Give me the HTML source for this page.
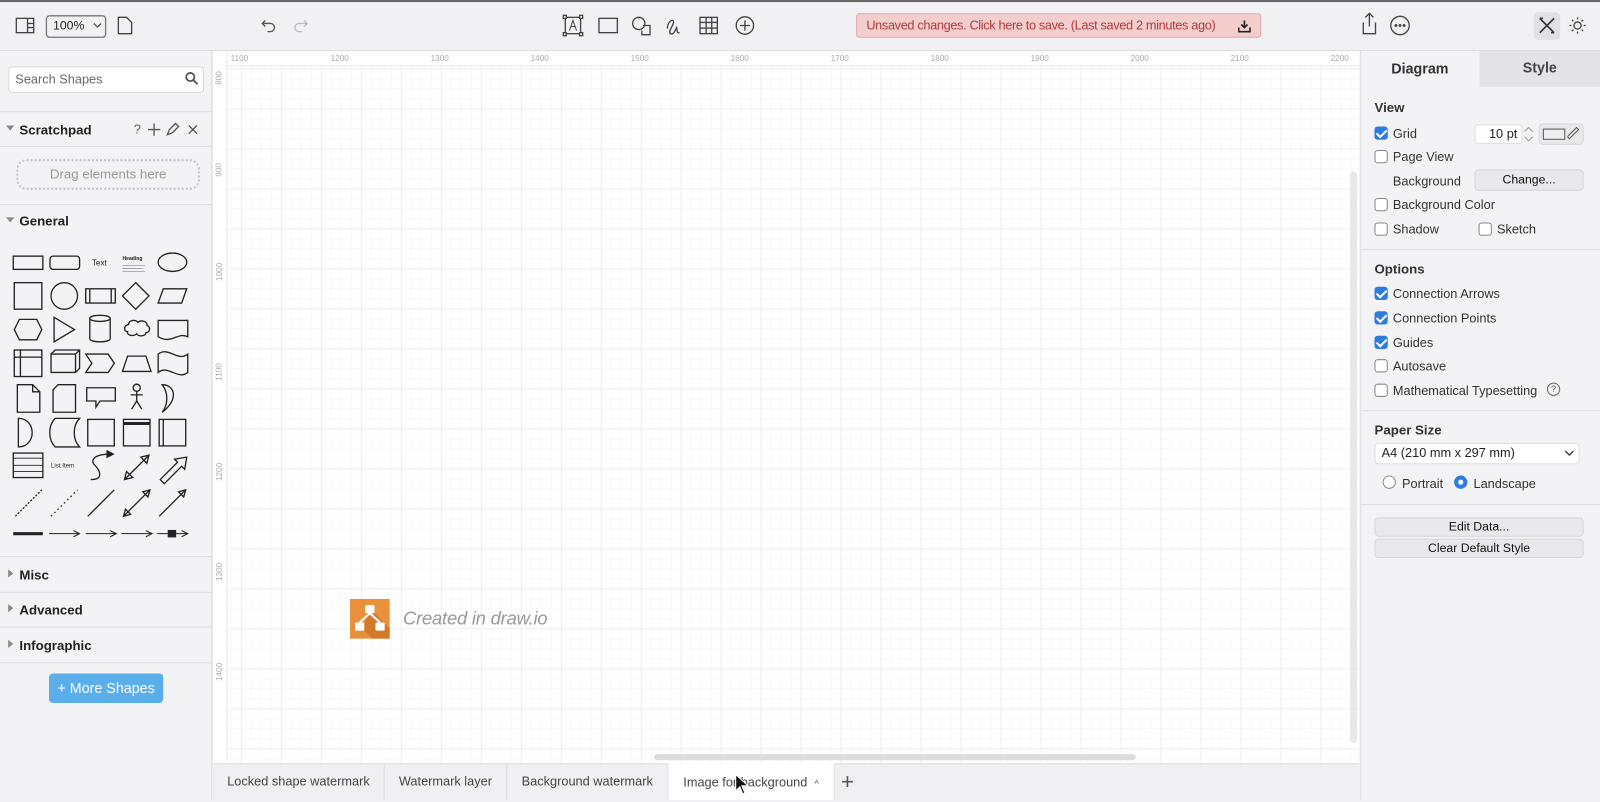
<!DOCTYPE html>
<html><head><meta charset="utf-8"><style>
*{box-sizing:border-box;margin:0;padding:0}
html,body{width:1600px;height:800px;overflow:hidden;background:#f1f1f3}
#w{position:absolute;left:0;top:0;width:1568px;height:784px;transform:scale(1.020408);transform-origin:0 0;font-family:"Liberation Sans",sans-serif;color:#222;font-size:12px}
.a{position:absolute}
.top{left:0;top:0;width:1568px;height:50px;background:#f1f1f3;border-top:2px solid #666;border-bottom:1px solid #ddd}
.side{left:0;top:50px;width:208px;height:734px;background:#f3f3f5;border-right:1px solid #ddd}
.canvas{left:209px;top:50px;width:1123px;height:698px;background-color:#fff;
background-image:linear-gradient(#efeff2 1px,transparent 1px),linear-gradient(90deg,#efeff2 1px,transparent 1px),linear-gradient(#f8f8fa 1px,transparent 1px),linear-gradient(90deg,#f8f8fa 1px,transparent 1px);
background-size:39.2px 39.2px,39.2px 39.2px,9.8px 9.8px,9.8px 9.8px;background-position:27px 17px}
.rt{left:209px;top:50px;width:1123px;height:15px;background:#fff;border-bottom:1px solid #e8e8e8}
.rl{left:209px;top:50px;width:14px;height:698px;background:#fff;border-right:1px solid #e8e8e8}
.rp{left:1333px;top:50px;width:235px;height:734px;background:#f3f3f5;border-left:1px solid #ddd}
.hr{height:1px;background:#ddd}
.cb{width:13px;height:13px;border:1px solid #888;border-radius:3px;background:#fff}
.cb.on{background:#2f7ce0;border-color:#2f7ce0}
.cb.on:after{content:"";position:absolute;left:3px;top:0px;width:4px;height:8px;border:solid #fff;border-width:0 2px 2px 0;transform:rotate(45deg)}
.lbl{font-size:12.5px;color:#333}
.btn{background:#e9e9eb;border:1px solid #d6d6d8;border-radius:4px;text-align:center;font-size:12px;color:#111}
.tab{top:748px;height:36px;font-size:12.5px;color:#444;line-height:36px;text-align:center;border-right:1px solid #ddd}
.rs{font-size:8px;color:#aaa}
.hd{font-size:13px;font-weight:bold;color:#222}
</style></head><body><div id="w">
<div class="a top"></div>
<svg class="a" style="left:0;top:0" width="1568" height="50" fill="none" stroke="#444" stroke-width="1.3">
<rect x="16" y="18" width="17" height="14"/><line x1="27" y1="18" x2="27" y2="32"/><line x1="27" y1="23" x2="33" y2="23"/><line x1="27" y1="27" x2="33" y2="27"/>
<rect x="45.5" y="15.5" width="58" height="21" rx="3" stroke="#777"/>
<path d="M92 23l3.5 3.5L99 23" stroke="#555"/>
<path d="M116 17h8l5 5v11h-13z"/>
<path d="M260 20l-3 3 3 3M257 23h8a4 4 0 010 8h-3" stroke="#555"/>
<path d="M298 20l3 3-3 3M301 23h-8a4 4 0 000 8h3" stroke="#bbb"/>
<rect x="554" y="17" width="15" height="16"/><rect x="552" y="15" width="3" height="3" fill="#fff"/><rect x="568" y="15" width="3" height="3" fill="#fff"/><rect x="552" y="32" width="3" height="3" fill="#fff"/><rect x="568" y="32" width="3" height="3" fill="#fff"/>
<path d="M558 30l3.5-10 3.5 10M559.5 26h4" stroke-width="1"/>
<rect x="587" y="18" width="18" height="14"/>
<circle cx="626" cy="23" r="6"/><path d="M630 25h7v9h-8v-4"/>
<path d="M654 28c0-6 5-10 6-7s-6 10-3 12 5-4 6-6c1 3 0 6 3 5"/>
<rect x="686" y="17" width="17" height="16"/><line x1="686" y1="22" x2="703" y2="22"/><line x1="686" y1="27.5" x2="703" y2="27.5"/><line x1="692" y1="17" x2="692" y2="33"/><line x1="697.5" y1="17" x2="697.5" y2="33"/>
<circle cx="730" cy="25" r="8.5"/><path d="M730 20v10M725 25h10"/>
<path d="M1336 22v11h12V22M1342 13v13M1338 17l4-4 4 4"/>
<circle cx="1372" cy="25" r="9"/><circle cx="1368" cy="25" r=".8" fill="#444"/><circle cx="1372" cy="25" r=".8" fill="#444"/><circle cx="1376" cy="25" r=".8" fill="#444"/>
<rect x="1503" y="12" width="26" height="27" rx="4" fill="#e1e1e4" stroke="none"/>
<path d="M1509 18l14 14M1523 18l-14 14M1509 18l3 0M1520 32l3 0" stroke="#333" stroke-width="1.6"/>
<circle cx="1546" cy="25" r="3.5"/><path d="M1546 17v2M1546 31v2M1538 25h2M1552 25h2M1540.5 19.5l1.4 1.4M1550 29l1.4 1.4M1540.5 30.5l1.4-1.4M1550 21l1.4-1.4"/>
</svg>
<div class="a" style="left:52px;top:18px;font-size:12px;color:#222">100%</div>
<div class="a" style="left:839px;top:13px;width:397px;height:24px;background:#f4cdcd;border:1px solid #e2a6a6;border-radius:3px;color:#b23b3b;font-size:12.5px;letter-spacing:-0.35px;line-height:22px;padding-left:9px;white-space:nowrap;overflow:hidden">Unsaved changes. Click here to save. (Last saved 2 minutes ago)
<svg class="a" style="right:9px;top:5px" width="13" height="13" fill="none" stroke="#222" stroke-width="1.6"><path d="M6.5 1v7M3.5 5l3 3 3-3M1 8v4h11V8"/></svg></div>

<div class="a side"></div>
<div class="a" style="left:8px;top:65px;width:192px;height:26px;background:#fff;border:1px solid #d8d8d8;border-radius:4px;font-size:12.5px;color:#666;line-height:24px;padding-left:6px">Search Shapes</div>
<svg class="a" style="left:181px;top:70px" width="14" height="14" fill="none" stroke="#555" stroke-width="1.8"><circle cx="5.5" cy="5.5" r="4"/><path d="M8.5 8.5l4 4"/></svg>
<div class="a hr" style="left:0;top:109px;width:208px"></div>
<div class="a" style="left:6px;top:123px;width:0;height:0;border-left:4px solid transparent;border-right:4px solid transparent;border-top:5px solid #888"></div>
<div class="a hd" style="left:19px;top:120px;font-weight:600">Scratchpad</div>
<div class="a" style="left:131px;top:119px;font-size:13px;color:#666">?</div>
<svg class="a" style="left:144px;top:120px" width="55" height="14" fill="none" stroke="#555" stroke-width="1.3"><path d="M7 1v12M1 7h12M20 12l2-5 6-6 3 3-6 6zM41 3l8 8M49 3l-8 8"/></svg>
<div class="a hr" style="left:0;top:143px;width:208px"></div>
<div class="a" style="left:16px;top:156px;width:180px;height:30px;border:2px dotted #c4c4c8;border-radius:10px;text-align:center;line-height:26px;color:#999;font-size:13px">Drag elements here</div>
<div class="a hr" style="left:0;top:200px;width:208px"></div>
<div class="a" style="left:6px;top:213px;border-left:4px solid transparent;border-right:4px solid transparent;border-top:5px solid #888"></div>
<div class="a hd" style="left:19px;top:209px;font-weight:600">General</div>
<svg class="a" style="left:0;top:240px" width="208" height="300" fill="none" stroke="#222" stroke-width="1.3">
<rect x="13" y="11" width="29" height="13"/><rect x="49" y="11" width="29" height="13" rx="3"/>
<text x="90" y="20" font-size="8" fill="#222" stroke="none" font-family="Liberation Sans">Text</text>
<text x="120" y="15" font-size="5" font-weight="bold" fill="#222" stroke="none" font-family="Liberation Sans">Heading</text>
<path d="M120 20h22M120 23h20M120 26h22" stroke="#888" stroke-width=".7"/>
<ellipse cx="169" cy="17" rx="14" ry="9"/>
<rect x="14" y="37" width="27" height="26"/><circle cx="63" cy="50" r="13"/><rect x="84" y="43" width="29" height="14"/><path d="M88 43v14M109 43v14"/><path d="M133 37l13 13-13 13-13-13z"/><path d="M160 43h23l-5 14h-23z"/>
<path d="M19 73h17l5 10-5 10H19l-5-10z"/><path d="M53 71l20 12-20 12z"/><path d="M88 72v20c0 4 20 4 20 0V72c0-4-20-4-20 0c0 4 20 4 20 0"/>
<path d="M126 78c0-5 8-5 9-2 3-3 10-1 9 3 4 1 3 7-1 7 0 4-8 4-9 1-3 3-10 2-9-2-4 0-4-6 1-7z"/><path d="M155 74h29v16c-10-5-16 8-29 0z"/>
<rect x="14" y="103" width="27" height="26"/><path d="M14 110h27M20 103v26"/><path d="M50 107l4-4h24v18l-4 4H50zM50 107h24v18M74 107l4-4"/><path d="M84 107h22l6 9-6 9H84l6-9z"/><path d="M125 109h18l5 15h-28z"/><path d="M155 107c10-8 19 8 29 0v18c-10 8-19-8-29 0z"/>
<path d="M17 137h15l7 7v20H17zM32 137v7h7"/><path d="M57 137h17v27H52v-22z"/><path d="M85 140h28v13h-15l-4 6v-6h-9z"/><circle cx="134" cy="140" r="3.5"/><path d="M134 143v10M128 147h12M134 153l-5 8M134 153l5 8"/><path d="M159 137c12 0 17 14 0 27 6-8 6-19 0-27z"/>
<path d="M18 170c18 0 18 28 0 28z"/><path d="M54 170h24c-7 7-7 21 0 28H54c-7-7-7-21 0-28z"/><rect x="86" y="171" width="26" height="26"/><rect x="121" y="171" width="26" height="26"/><path d="M121 175h26" stroke-width="3"/><rect x="156" y="171" width="26" height="26"/><path d="M160 171v26"/>
<rect x="13" y="204" width="29" height="24"/><path d="M13 209h29M13 216h29M13 222h29" stroke-width=".8"/>
<text x="50" y="218" font-size="6" fill="#222" stroke="none" font-family="Liberation Sans">List Item</text>
<path d="M89 230c14 0 8-10 4-14s-3-10 13-11"/><path d="M105 202l6 3-6 3z" fill="#222"/>
<path d="M122 230l24-24M122 230l2-8 6 6zM146 206l-2 8-6-6z"/><path d="M157 230l4 4 17-17 3 3 2-12-12 2 3 3-17 17z"/>
<path d="M15 266l26-26" stroke-dasharray="2 1.5"/><path d="M50 266l26-26" stroke-dasharray="1.5 3"/><path d="M86 266l26-26"/><path d="M121 266l26-26M121 266l2-7 5 5zM147 240l-2 7-5-5z" /><path d="M156 266l26-26M182 240l-2 7-5-5z"/>
<path d="M13 283h29" stroke-width="3"/><path d="M48 283h30M72 280l6 3-6 3" stroke-width="1"/><path d="M84 283h30M108 280l6 3-6 3" stroke-width="1"/><path d="M119 283h30M143 280l6 3-6 3" stroke-width="1"/><path d="M154 283h30M178 280l6 3-6 3" stroke-width="1"/><rect x="165" y="280" width="7" height="6" fill="#222"/>
</svg>
<div class="a hr" style="left:0;top:545px;width:208px"></div>
<div class="a" style="left:8px;top:558px;border-top:4px solid transparent;border-bottom:4px solid transparent;border-left:5px solid #888"></div>
<div class="a hd" style="left:19px;top:556px;font-weight:600">Misc</div>
<div class="a hr" style="left:0;top:580px;width:208px"></div>
<div class="a" style="left:8px;top:592px;border-top:4px solid transparent;border-bottom:4px solid transparent;border-left:5px solid #888"></div>
<div class="a hd" style="left:19px;top:590px;font-weight:600">Advanced</div>
<div class="a hr" style="left:0;top:614px;width:208px"></div>
<div class="a" style="left:8px;top:627px;border-top:4px solid transparent;border-bottom:4px solid transparent;border-left:5px solid #888"></div>
<div class="a hd" style="left:19px;top:625px;font-weight:600">Infographic</div>
<div class="a hr" style="left:0;top:649px;width:208px"></div>
<div class="a" style="left:48px;top:660px;width:112px;height:29px;background:#5aaeea;border-radius:4px;color:#fff;font-size:14px;line-height:29px;text-align:center">+ More Shapes</div>

<div class="a canvas"></div>
<div class="a rt"></div>
<div class="a rl"></div>
<div class="a rs" style="left:226px;top:53px">1100</div><div class="a rs" style="left:324px;top:53px">1200</div><div class="a rs" style="left:422px;top:53px">1300</div><div class="a rs" style="left:520px;top:53px">1400</div><div class="a rs" style="left:618px;top:53px">1500</div><div class="a rs" style="left:716px;top:53px">1600</div><div class="a rs" style="left:814px;top:53px">1700</div><div class="a rs" style="left:912px;top:53px">1800</div><div class="a rs" style="left:1010px;top:53px">1900</div><div class="a rs" style="left:1108px;top:53px">2000</div><div class="a rs" style="left:1206px;top:53px">2100</div><div class="a rs" style="left:1304px;top:53px">2200</div>
<div class="a rs" style="left:208px;top:72px;transform:rotate(-90deg)">800</div>
<div class="a rs" style="left:208px;top:162px;transform:rotate(-90deg)">900</div>
<div class="a rs" style="left:206px;top:262px;transform:rotate(-90deg)">1000</div>
<div class="a rs" style="left:206px;top:360px;transform:rotate(-90deg)">1100</div>
<div class="a rs" style="left:206px;top:458px;transform:rotate(-90deg)">1200</div>
<div class="a rs" style="left:206px;top:556px;transform:rotate(-90deg)">1300</div>
<div class="a rs" style="left:206px;top:654px;transform:rotate(-90deg)">1400</div>
<div class="a" style="left:1323px;top:168px;width:7px;height:560px;background:#e8e8ea;border-radius:4px"></div>
<div class="a" style="left:641px;top:739px;width:472px;height:6px;background:#dcdcde;border-radius:3px"></div>
<svg class="a" style="left:343px;top:587px" width="39" height="39"><rect width="39" height="39" fill="#e8913a"/><path d="M20 10l19 19v10H22L12 29z" fill="#d27a2a"/><rect x="15" y="6" width="9" height="8" rx="1" fill="#fff"/><rect x="5" y="23" width="9" height="8" rx="1" fill="#fff"/><rect x="25" y="23" width="9" height="8" rx="1" fill="#fff"/><path d="M19.5 14l-10 9M19.5 14l10 9" stroke="#fff" stroke-width="2"/></svg>
<div class="a" style="left:395px;top:596px;font-size:18px;font-style:italic;color:#999;letter-spacing:-0.2px">Created in draw.io</div>

<div class="a" style="left:209px;top:748px;width:1123px;height:36px;background:#f0f0f2;border-top:1px solid #ddd"></div>
<div class="a tab" style="left:209px;width:168px">Locked shape watermark</div>
<div class="a tab" style="left:377px;width:120px">Watermark layer</div>
<div class="a tab" style="left:497px;width:158px">Background watermark</div>
<div class="a tab" style="left:655px;width:163px;background:#fff;border-top:1px solid #fff">Image for background &nbsp;<span style="font-size:9px">^</span></div>
<div class="a" style="left:824px;top:753px;font-size:22px;color:#555;font-weight:300">+</div>
<svg class="a" style="left:720px;top:758px" width="14" height="22"><path d="M1 1v16l4-4 3 7 2-1-3-7h6z" fill="#111" stroke="#fff" stroke-width="1"/></svg>

<div class="a rp"></div>
<div class="a" style="left:1450px;top:50px;width:118px;height:35px;background:#e4e4e6"></div>
<div class="a" style="left:1333px;top:59px;width:117px;text-align:center;font-size:14px;font-weight:bold;color:#333">Diagram</div>
<div class="a" style="left:1450px;top:58px;width:118px;text-align:center;font-size:14px;font-weight:bold;color:#444">Style</div>
<div class="a hd" style="left:1347px;top:98px;color:#333">View</div>
<div class="a cb on" style="left:1347px;top:124px"></div><div class="a lbl" style="left:1365px;top:124px">Grid</div>
<div class="a" style="left:1445px;top:122px;width:47px;height:19px;background:#fff;border:1px solid #ddd;border-radius:3px;text-align:right;padding-right:4px;line-height:17px;font-size:12.5px">10 pt</div>
<svg class="a" style="left:1492px;top:122px" width="12" height="19" fill="none" stroke="#999"><path d="M2 7l4-4 4 4M2 12l4 4 4-4"/></svg>
<div class="a btn" style="left:1508px;top:121px;width:44px;height:21px"></div>
<div class="a" style="left:1512px;top:126px;width:22px;height:11px;border:1px solid #555;background:#eee"></div>
<svg class="a" style="left:1536px;top:124px" width="12" height="14" fill="none" stroke="#555"><path d="M2 12l7-7 2-2-2-2-2 2-7 7z"/></svg>
<div class="a cb" style="left:1347px;top:147px"></div><div class="a lbl" style="left:1365px;top:147px">Page View</div>
<div class="a lbl" style="left:1365px;top:171px">Background</div>
<div class="a btn" style="left:1445px;top:166px;width:107px;height:21px;line-height:19px">Change...</div>
<div class="a cb" style="left:1347px;top:194px"></div><div class="a lbl" style="left:1365px;top:194px">Background Color</div>
<div class="a cb" style="left:1347px;top:218px"></div><div class="a lbl" style="left:1365px;top:218px">Shadow</div>
<div class="a cb" style="left:1449px;top:218px"></div><div class="a lbl" style="left:1467px;top:218px">Sketch</div>
<div class="a hr" style="left:1334px;top:244px;width:234px"></div>
<div class="a hd" style="left:1347px;top:256px;color:#333">Options</div>
<div class="a cb on" style="left:1347px;top:281px"></div><div class="a lbl" style="left:1365px;top:281px">Connection Arrows</div>
<div class="a cb on" style="left:1347px;top:305px"></div><div class="a lbl" style="left:1365px;top:305px">Connection Points</div>
<div class="a cb on" style="left:1347px;top:329px"></div><div class="a lbl" style="left:1365px;top:329px">Guides</div>
<div class="a cb" style="left:1347px;top:352px"></div><div class="a lbl" style="left:1365px;top:352px">Autosave</div>
<div class="a cb" style="left:1347px;top:376px"></div><div class="a lbl" style="left:1365px;top:376px">Mathematical Typesetting</div>
<div class="a" style="left:1516px;top:375px;width:13px;height:13px;border:1px solid #666;border-radius:50%;font-size:9px;text-align:center;line-height:11px;color:#555">?</div>
<div class="a hr" style="left:1334px;top:402px;width:234px"></div>
<div class="a hd" style="left:1347px;top:414px;color:#333">Paper Size</div>
<div class="a" style="left:1347px;top:434px;width:201px;height:21px;background:#fff;border:1px solid #ddd;border-radius:4px;font-size:12.5px;line-height:19px;padding-left:6px">A4 (210 mm x 297 mm)</div>
<svg class="a" style="left:1533px;top:440px" width="10" height="8" fill="none" stroke="#333" stroke-width="1.3"><path d="M1 2l4 4 4-4"/></svg>
<div class="a" style="left:1355px;top:466px;width:13px;height:13px;border:1px solid #888;border-radius:50%;background:#fff"></div>
<div class="a lbl" style="left:1374px;top:467px">Portrait</div>
<div class="a" style="left:1425px;top:466px;width:13px;height:13px;border-radius:50%;background:#2f7ce0"></div>
<div class="a" style="left:1429px;top:470px;width:5px;height:5px;border-radius:50%;background:#fff"></div>
<div class="a lbl" style="left:1444px;top:467px">Landscape</div>
<div class="a hr" style="left:1334px;top:494px;width:234px"></div>
<div class="a btn" style="left:1347px;top:507px;width:205px;height:19px;line-height:17px">Edit Data...</div>
<div class="a btn" style="left:1347px;top:528px;width:205px;height:19px;line-height:17px">Clear Default Style</div>
</div></body></html>
